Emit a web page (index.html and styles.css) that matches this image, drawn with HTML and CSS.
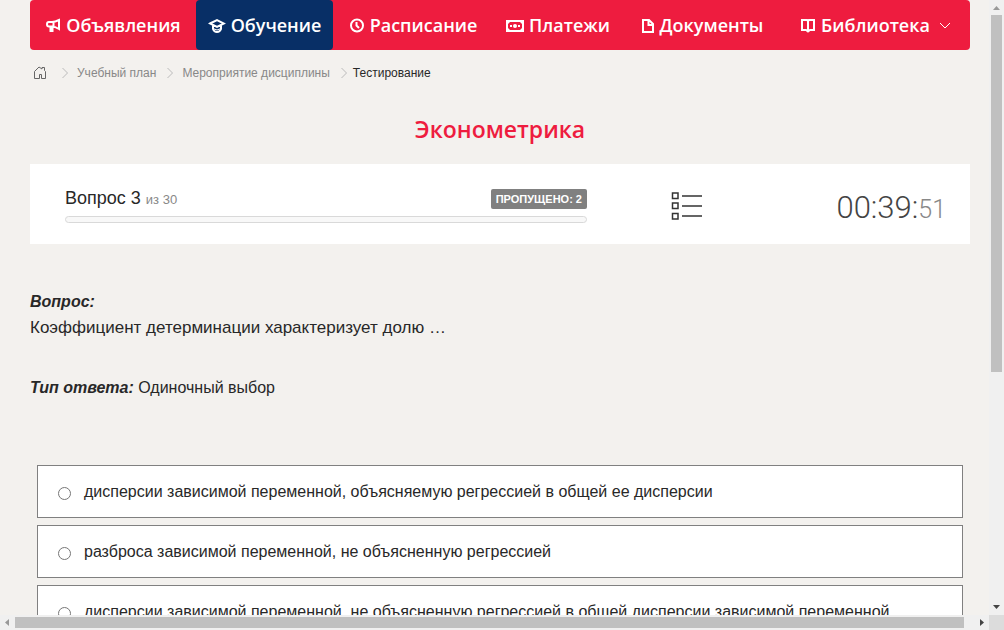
FILE: index.html
```html
<!DOCTYPE html>
<html lang="ru">
<head>
<meta charset="utf-8">
<meta name="viewport" content="width=device-width, initial-scale=1">
<title>Эконометрика</title>
<link rel="stylesheet" href="styles.css">
</head>
<body>
<div class="window">
  <div class="viewport">
    <div class="page">
      <nav class="menu" aria-label="Главное меню">
        <a class="menu-item" href="#">
          <svg class="icon" width="16" height="16" viewBox="0 0 16 16"><path d="M4 5H7Q10 5 14 3V12Q10 9.500 7 9.500H4Q2 9.500 2 7.200T4 5ZM8.500 5V9.500M5.500 9.500V14H7.500V9.500"/></svg>
          <span>Объявления</span>
        </a>
        <a class="menu-item active" href="#" aria-current="page">
          <svg class="icon" width="18" height="16" viewBox="0 0 18 16"><path d="M2 6.500L9 3L16 6.500L9 10ZM5 8.500V12Q6 15 9 15T13 12V8.500"/><path class="fine" d="M5 11.500L9 13L13 11.500"/></svg>
          <span>Обучение</span>
        </a>
        <a class="menu-item" href="#">
          <svg class="icon" width="16" height="16" viewBox="0 0 16 16"><circle cx="8" cy="8.500" r="6"/><path d="M7.500 5V8.500L10 11"/></svg>
          <span>Расписание</span>
        </a>
        <a class="menu-item" href="#">
          <svg class="icon" width="18" height="16" viewBox="0 0 18 16"><path class="solid" fill-rule="evenodd" d="M0 3H18V15H0ZM4 5L2 7V11L4 13H14L16 11V7L14 5Z"/><circle class="solid" cx="9" cy="9" r="2"/><path class="solid" d="M4 8H6V10H4ZM12 8H14V10H12Z"/></svg>
          <span>Платежи</span>
        </a>
        <a class="menu-item" href="#">
          <svg class="icon" width="14" height="16" viewBox="0 0 14 16"><path d="M2 3H8L12 7V15H2ZM7.500 3V8H12"/></svg>
          <span>Документы</span>
        </a>
        <a class="menu-item" href="#">
          <svg class="icon" width="16" height="16" viewBox="0 0 16 16"><path d="M2 3H7L8 4L9 3H14V13H10L8 14.500L6 13H2ZM8 4V14"/></svg>
          <span>Библиотека</span>
          <svg class="icon thin" width="12" height="8" viewBox="0 0 12 8"><path d="M1 2L6 7L11 2"/></svg>
        </a>
      </nav>

      <nav class="crumbs" aria-label="Навигация">
        <a class="home" href="#" aria-label="Главная">
          <svg width="14" height="14" viewBox="0 0 14 14"><path d="M1.500 12.500V5.500L6 1L9 3V1.500H11.500V4.500L12.500 5.500V12.500H8.500V8.500H6.500V12.500Z"/></svg>
        </a>
        <svg class="sep" width="8" height="12" viewBox="0 0 8 12"><path d="M1.500 1L6.500 6L1.500 11"/></svg>
        <a href="#">Учебный план</a>
        <svg class="sep" width="8" height="12" viewBox="0 0 8 12"><path d="M1.500 1L6.500 6L1.500 11"/></svg>
        <a href="#">Мероприятие дисциплины</a>
        <svg class="sep" width="8" height="12" viewBox="0 0 8 12"><path d="M1.500 1L6.500 6L1.500 11"/></svg>
        <span class="current">Тестирование</span>
      </nav>

      <main>
        <h1 class="title">Эконометрика</h1>

        <section class="status">
          <div class="progress">
            <div class="progress-head">
              <div class="counter">Вопрос 3 <small>из 30</small></div>
              <span class="badge">ПРОПУЩЕНО: 2</span>
            </div>
            <div class="bar"></div>
          </div>
          <button class="list-button" type="button" aria-label="Список вопросов">
            <svg width="32" height="30" viewBox="0 0 32 30"><path d="M1.500 2H7V7.500H1.500ZM1.500 12H7V17.500H1.500ZM1.500 22.500H7V28H1.500ZM11 5H31M11 15H31M11 25H31"/></svg>
          </button>
          <div class="timer">00:39:<small>51</small></div>
        </section>

        <section class="question">
          <h2 class="label">Вопрос:</h2>
          <p class="question-text">Коэффициент детерминации характеризует долю …</p>
          <p class="kind"><strong class="label">Тип ответа:</strong> Одиночный выбор</p>
        </section>

        <form class="answers">
          <label class="answer"><input type="radio" name="answer"><span>дисперсии зависимой переменной, объясняемую регрессией в общей ее дисперсии</span></label>
          <label class="answer"><input type="radio" name="answer"><span>разброса зависимой переменной, не объясненную регрессией</span></label>
          <label class="answer"><input type="radio" name="answer"><span>дисперсии зависимой переменной, не объясненную регрессией в общей дисперсии зависимой переменной</span></label>
        </form>
      </main>
    </div>
  </div>

  <div class="scroll vertical" aria-hidden="true">
    <svg width="15" height="15" viewBox="0 0 15 15"><path class="idle" d="M4 10L7.500 6L11 10Z"/></svg>
    <div class="track"><div class="thumb"></div></div>
    <svg width="15" height="15" viewBox="0 0 15 15"><path d="M4 5L7.500 9L11 5Z"/></svg>
  </div>
  <div class="scroll horizontal" aria-hidden="true">
    <svg width="15" height="15" viewBox="0 0 15 15"><path class="idle" d="M9 4L5 7.500L9 11Z"/></svg>
    <div class="track"><div class="thumb"></div></div>
    <svg width="15" height="15" viewBox="0 0 15 15"><path d="M6 4L10 7.500L6 11Z"/></svg>
  </div>
  <div class="corner"></div>
</div>
</body>
</html>
```

FILE: styles.css
```css
* {
  box-sizing: border-box;
}

body {
  margin: 0;
  color: #282828;
  background: #f3f1ee;
  font-family: "Liberation Sans", Arial, sans-serif;
  font-size: 16px;
  line-height: 24px;
}

a {
  color: inherit;
  text-decoration: none;
}

h1,
h2,
p {
  margin: 0;
}

svg {
  flex: none;
}

.window {
  display: grid;
  grid-template-columns: minmax(0, 1fr) 15px;
  grid-template-rows: minmax(0, 1fr) 15px;
  height: 100vh;
}

.viewport {
  overflow: hidden;
}

.page {
  padding: 0 19px 0 30px;
}

/* Main menu */

.menu {
  display: grid;
  grid-template-columns: 166fr 137fr 160fr 130fr 158fr 189fr;
  overflow: hidden;
  border-radius: 4px;
  background: #ee1c3f;
  color: #fff;
  font-family: "Open Sans", "Noto Sans", sans-serif;
  font-size: 18px;
  font-weight: 600;
}

.menu-item {
  display: flex;
  align-items: center;
  justify-content: center;
  gap: 5px;
  height: 50px;
}

.menu-item.active {
  border-radius: 4px;
  background: #082f66;
}

.icon {
  fill: none;
  stroke: #fff;
  stroke-width: 2;
}

.icon .solid {
  fill: #fff;
  stroke: none;
}

.icon .fine {
  stroke-width: 1;
}

.icon.thin {
  margin-left: 4px;
  stroke-width: 1;
}

/* Breadcrumbs */

.crumbs {
  display: flex;
  align-items: center;
  gap: 8px;
  height: 46px;
  padding-left: 3px;
  color: #888;
  font-size: 12px;
}

.home {
  display: flex;
  margin-right: 6px;
}

.home svg {
  fill: none;
  stroke: #666;
}

.sep {
  fill: none;
  stroke: #bbb;
}

.sep + a {
  margin-right: 2px;
}

.crumbs .current {
  margin-left: -3px;
  color: #282828;
}

.title {
  padding: 17px 0 19px;
  color: #ee1c3f;
  font-family: "Open Sans", "Noto Sans", sans-serif;
  font-size: 23px;
  font-weight: 600;
  line-height: 32px;
  text-align: center;
}

/* Test status */

.status {
  display: grid;
  grid-template-columns: minmax(0, 522fr) 32px minmax(0, 159fr);
  column-gap: 84px;
  align-items: center;
  height: 80px;
  padding: 4px 24px 0 35px;
  background: #fff;
}

.progress-head {
  display: flex;
  align-items: center;
  justify-content: space-between;
  height: 20px;
  margin-bottom: 7px;
}

.counter {
  font-size: 18px;
}

.counter small {
  color: #888;
  font-size: 13px;
}

.badge {
  padding: 0 5px;
  border-radius: 2px;
  background: #808080;
  color: #fff;
  font-size: 11px;
  font-weight: 700;
  line-height: 20px;
}

.bar {
  height: 7px;
  border: 1px solid #d9d9d9;
  border-radius: 4px;
  background: #f8f8f8;
}

.list-button {
  display: flex;
  padding: 0;
  border: 0;
  background: none;
}

.list-button svg {
  fill: none;
  stroke: #333;
  stroke-width: 1.5;
}

.timer {
  padding-top: 6px;
  color: #444;
  font-family: Roboto, Lato, sans-serif;
  font-size: 31px;
  font-weight: 300;
  line-height: 40px;
  text-align: right;
}

.timer small {
  color: #888;
  font-size: 25px;
}

/* Question */

.question {
  padding: 46px 0 65px;
}

.label {
  font-size: 16px;
  font-style: italic;
  font-weight: 700;
}

.question-text {
  margin: 2px 0 36px;
  font-size: 17px;
}

.answers {
  display: grid;
  gap: 7px;
  padding: 0 7px;
}

.answer {
  display: flex;
  align-items: center;
  gap: 13px;
  height: 53px;
  padding-left: 20px;
  border: 1px solid #808080;
  background: #fff;
}

.answer input {
  width: 13px;
  height: 13px;
  margin: 3px 0 0;
}

/* Scroll bars */

.scroll {
  display: flex;
  background: #f0f0f0;
}

.scroll svg {
  fill: #444;
}

.scroll .idle {
  fill: #999;
}

.vertical {
  grid-column: 2;
  grid-row: 1;
  flex-direction: column;
}

.horizontal {
  grid-column: 1;
  grid-row: 2;
}

.track {
  flex: 1;
}

.thumb {
  background: #c0c0c0;
}

.vertical .thumb {
  height: 61%;
  margin: 0 2px;
}

.horizontal .track {
  padding: 2px 0;
}

.horizontal .thumb {
  width: 99%;
  height: 11px;
}

.corner {
  background: #dcdcdc;
}
```
